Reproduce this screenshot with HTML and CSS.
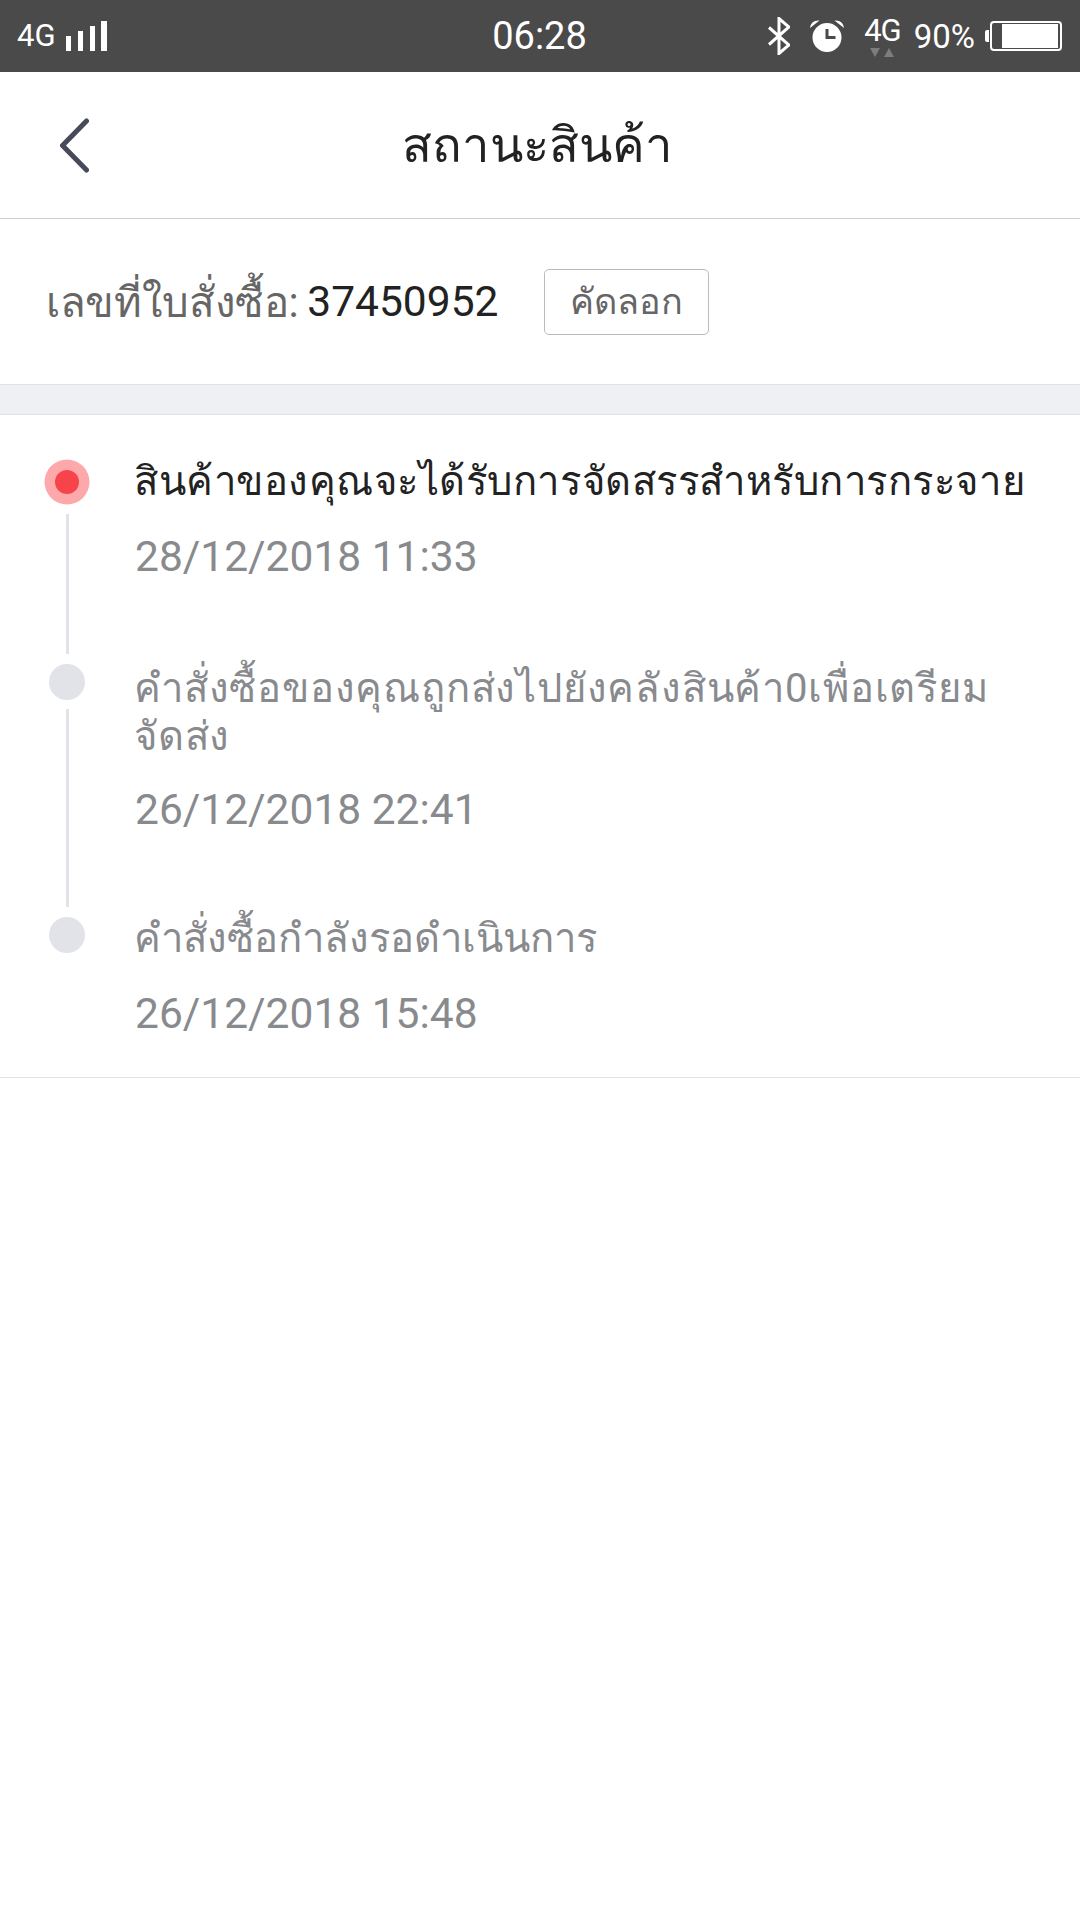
FILE: index.html
```html
<!DOCTYPE html>
<html lang="th">
  <head>
    <meta charset="utf-8">
    <title>สถานะสินค้า</title>
    <link rel="stylesheet" href="styles.css">
  </head>
  <body>
    <div class="statusbar">
      <div class="status-left">
        <span class="net">4G</span>
        <svg class="signal" width="41" height="30" viewBox="0 0 41 30"><path fill="#fff" d="M0 15h5v15H0zM12 10h5v20h-5zM24 5h5v25h-5zM35 0h6v30h-6z"/></svg>
      </div>
      <div class="clock">06:28</div>
      <div class="status-right">
        <svg class="bt" width="22" height="38" viewBox="0 0 22 38"><path fill="none" stroke="#fff" stroke-width="3" d="M1 10.500l20 17.500-10 8.500V1.500l10 8.500L1 27.500"/></svg>
        <svg class="alarm" width="34" height="32" viewBox="0 0 34 32"><path fill="#fff" d="M17 3a14.500 14.500 0 1 0 0 29 14.500 14.500 0 0 0 0-29zM0 8C.5 3 4 0 9.500 0.500zM34 8C33.500 3 30 0 24.500 0.500z"/><path fill="none" stroke="#4a4a4a" stroke-width="3" d="M17 9v8.500h8.500"/></svg>
        <div class="net-stack">
          <span class="net">4G</span>
          <svg width="24" height="9" viewBox="0 0 24 9"><path fill="#7d7d7d" d="M0 0h10L5 9zM14 9h10l-5-9z"/></svg>
        </div>
        <span class="pct">90%</span>
        <div class="battery"><i class="battery-cap"></i><div class="battery-body"><div class="battery-fill"></div></div></div>
      </div>
    </div>

    <header class="topbar">
      <svg class="back" width="29" height="55" viewBox="0 0 29 55"><path fill="none" stroke="#474a59" stroke-width="5" stroke-linecap="round" stroke-linejoin="round" d="M26.500 3L2.500 27.500l24 24.500"/></svg>
      <h1>สถานะสินค้า</h1>
    </header>

    <section class="order">
      <span class="order-label">เลขที่ใบสั่งซื้อ:</span>
      <span class="order-no">37450952</span>
      <button class="copy">คัดลอก</button>
    </section>

    <div class="band"></div>

    <ul class="track">
      <li class="step current">
        <div class="rail"><span class="dot"></span><span class="line"></span></div>
        <div class="info">
          <div class="msg">สินค้าของคุณจะได้รับการจัดสรรสำหรับการกระจาย</div>
          <div class="time">28/12/2018 11:33</div>
        </div>
      </li>
      <li class="step second">
        <div class="rail"><span class="dot"></span><span class="line"></span></div>
        <div class="info">
          <div class="msg">คำสั่งซื้อของคุณถูกส่งไปยังคลังสินค้า0เพื่อเตรียม<br>จัดส่ง</div>
          <div class="time">26/12/2018 22:41</div>
        </div>
      </li>
      <li class="step last">
        <div class="rail"><span class="dot"></span></div>
        <div class="info">
          <div class="msg">คำสั่งซื้อกำลังรอดำเนินการ</div>
          <div class="time">26/12/2018 15:48</div>
        </div>
      </li>
    </ul>
  </body>
</html>
```

FILE: styles.css
```css
* {
  box-sizing: border-box;
}

body {
  margin: 0;
  background: #fff;
  font-family: Roboto, "Noto Sans", "DejaVu Sans", sans-serif;
}

.statusbar {
  height: 72px;
  background: #4a4a4a;
  color: #fff;
  display: grid;
  grid-template-columns: 1fr auto 1fr;
  align-items: center;
  padding: 0 18px 0 17px;
}

.status-left {
  display: flex;
  align-items: center;
  gap: 10px;
}

.status-left .net {
  letter-spacing: 0;
}

.net {
  font-size: 31px;
  letter-spacing: -1px;
  line-height: 30px;
}

.clock {
  font-size: 38px;
}

.status-right {
  display: flex;
  align-items: center;
  justify-content: flex-end;
}

.alarm {
  margin-left: 20px;
}

.net-stack {
  display: flex;
  flex-direction: column;
  align-items: center;
  margin-left: 20px;
}

.net-stack svg {
  display: block;
  margin-top: 2px;
}

.pct {
  font-size: 33px;
  margin-left: 13px;
}

.battery {
  display: flex;
  align-items: center;
  margin-left: 10px;
}

.battery-cap {
  width: 4px;
  height: 12px;
  background: #fff;
  border-radius: 2px 0 0 2px;
}

.battery-body {
  width: 72px;
  height: 30px;
  margin-left: 1px;
  border: 2px solid #fff;
  border-radius: 4px;
  padding: 1px 2px 1px 10px;
}

.battery-fill {
  height: 100%;
  background: #fff;
}

.topbar {
  height: 147px;
  border-bottom: 1px solid #cfcfcf;
  display: grid;
  grid-template-columns: 1fr auto 1fr;
  align-items: center;
  padding-left: 60px;
}

.back {
  margin-top: 1px;
}

.topbar h1 {
  margin: 0 5px 0 -60px;
  font-size: 49px;
  font-weight: 400;
  color: #222;
}

.order {
  height: 165px;
  display: flex;
  align-items: center;
  padding-left: 46px;
}

.order-label {
  font-size: 42px;
  letter-spacing: -.35px;
  color: #666;
}

.order-no {
  font-size: 42.500px;
  color: #222;
  margin-left: 9px;
}

.copy {
  margin-left: 46px;
  width: 165px;
  height: 66px;
  background: #fff;
  border: 1px solid #bbb;
  border-radius: 5px;
  color: #666;
  font-family: inherit;
  font-size: 36px;
  padding: 0;
}

.band {
  height: 31px;
  background: #eff0f4;
  border-top: 1px solid #e3e3e6;
  border-bottom: 1px solid #e3e3e6;
}

.track {
  list-style: none;
  margin: 0;
  padding: 0 0 38px;
  border-bottom: 1px solid #e3e3e6;
}

.step {
  display: flex;
}

.rail {
  width: 135px;
  flex: none;
  display: flex;
  flex-direction: column;
  align-items: center;
  padding-right: 1px;
}

.dot {
  width: 36px;
  height: 36px;
  border-radius: 50%;
  background: #e1e3e8;
  flex: none;
}

.line {
  width: 3px;
  flex: 1;
  background: #e1e3e8;
  margin: 9px 0 10px;
}

.current .dot {
  width: 24px;
  height: 24px;
  margin-top: 55px;
  background: #f7444b;
  box-shadow: 0 0 0 10.500px #fda8aa;
}

.current .line {
  margin-top: 20px;
}

.info {
  padding-right: 30px;
}

.msg {
  font-size: 40px;
  line-height: 48px;
  color: #888a8e;
  margin-left: -1px;
  letter-spacing: .53px;
}

.current .msg {
  color: #222;
  padding-top: 43px;
}

.second .msg {
  margin-top: 1px;
  letter-spacing: .8px;
}

.last .msg {
  margin-top: -2px;
  letter-spacing: 0;
}

.time {
  font-size: 42.500px;
  line-height: 50px;
  color: #888a8e;
  margin-top: 24px;
  padding-bottom: 82px;
}

.current .time {
  margin-top: 26px;
}

.last .time {
  margin-top: 26px;
  padding-bottom: 0;
}
```
